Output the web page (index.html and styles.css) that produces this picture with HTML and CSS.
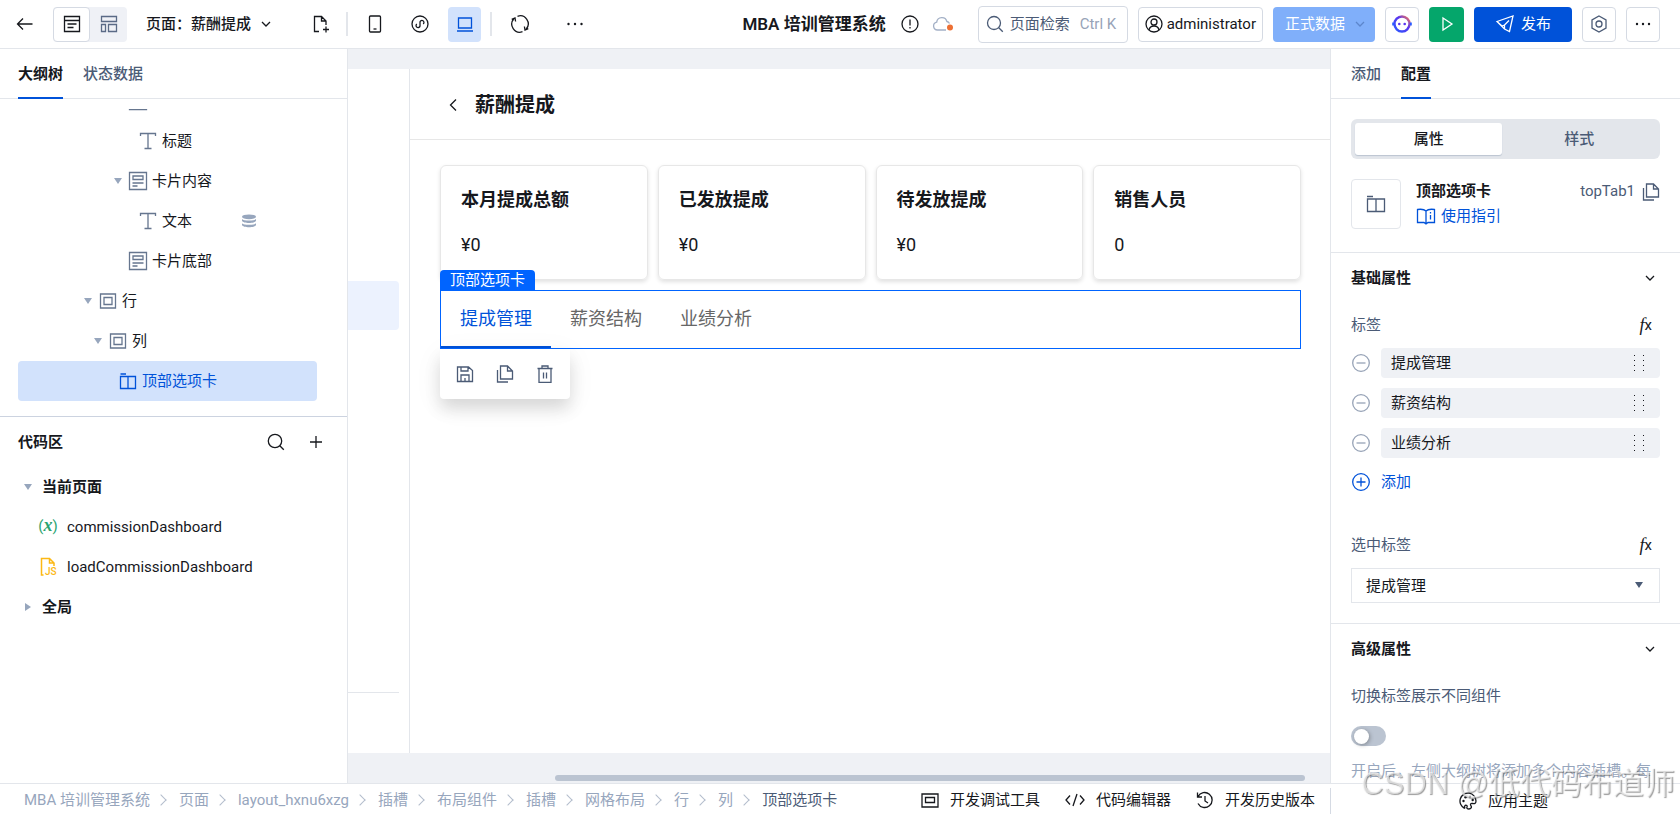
FILE: index.html
```
<!DOCTYPE html>
<html lang="zh-CN">
<head>
    <meta charset="UTF-8">
    <meta name="viewport" content="width=device-width, initial-scale=1.0">
    <title>MBA 培训管理系统</title>
    <link rel="stylesheet" href="styles.css">
</head>
<body>
    <header class="topbar">
        <div class="topbar-left">
            <button class="icon-btn back" aria-label="返回">
                <svg width="18" height="18" viewBox="0 0 18 18"><path d="M16.500 9H2M7 3.500L1.500 9L7 14.500"/></svg>
            </button>
            <div class="view-switch">
                <button class="view-btn active" aria-label="页面视图">
                    <svg width="18" height="18" viewBox="0 0 18 18"><path d="M1.500 1.500h15v15h-15zM1.500 5.500h15M4.500 9h9M4.500 12.500h6"/></svg>
                </button>
                <button class="view-btn" aria-label="布局视图">
                    <svg width="18" height="18" viewBox="0 0 18 18"><path d="M1.500 1.500h15v5h-15zM1.500 9.500h4v7h-4zM8.500 9.500h8v7h-8z"/></svg>
                </button>
            </div>
            <button class="page-select">页面：薪酬提成
                <svg width="12" height="12" viewBox="0 0 12 12"><path d="M2 4l4 4l4-4"/></svg>
            </button>
            <button class="icon-btn new-page" aria-label="新建页面">
                <svg width="18" height="18" viewBox="0 0 18 18"><path d="M7 16.500H2.500v-15h7l4.500 4.500v4M9.500 1.500V6H14M11 14.500h6M14 11.500v6"/></svg>
            </button>
            <span class="divider"></span>
            <div class="devices">
                <button class="icon-btn" aria-label="手机">
                    <svg width="18" height="18" viewBox="0 0 18 18"><rect x="3.500" y="1" width="11" height="16" rx="1"/><path d="M7.500 14h3"/></svg>
                </button>
                <button class="icon-btn" aria-label="小程序">
                    <svg width="18" height="18" viewBox="0 0 18 18"><circle cx="9" cy="9" r="8"/><path d="M5.800 9a2 2 0 1 0 3.200 2V7a2 2 0 1 1 3.200 2"/></svg>
                </button>
                <button class="icon-btn active" aria-label="电脑">
                    <svg width="18" height="18" viewBox="0 0 18 18"><path d="M2.500 3h13v10h-13zM1 16h16"/></svg>
                </button>
            </div>
            <span class="divider"></span>
            <button class="icon-btn refresh" aria-label="刷新">
                <svg width="20" height="20" viewBox="0 0 20 20"><path d="M7.500 2.300a8 8 0 0 1 8.600 12.900M12.500 17.700a8 8 0 0 1-8.600-12.900M18.300 14.600l-3.300 1.500l-.6-3.600M1.700 5.400l3.300-1.500l.6 3.600"/></svg>
            </button>
            <button class="icon-btn more" aria-label="更多">
                <svg width="18" height="18" viewBox="0 0 18 18"><g class="solid"><circle cx="2.500" cy="9" r="1.200"/><circle cx="9" cy="9" r="1.200"/><circle cx="15.500" cy="9" r="1.200"/></g></svg>
            </button>
        </div>
        <div class="topbar-right">
            <h1 class="app-name">MBA 培训管理系统</h1>
            <svg class="info" width="18" height="18" viewBox="0 0 18 18"><circle cx="9" cy="9" r="8"/><path d="M9 4.500v6M9 12v1.500"/></svg>
            <svg class="cloud" width="22" height="18" viewBox="0 0 22 18"><path d="M14 15H5.500a4 4 0 0 1-.8-7.900a5.200 5.200 0 0 1 10.200-.6a4.300 4.300 0 0 1 2.600 2"/><circle class="cloud-dot" cx="18" cy="12.500" r="3"/></svg>
            <button class="box-btn search">
                <svg width="18" height="18" viewBox="0 0 18 18"><circle cx="8" cy="8" r="6.500"/><path d="M12.800 12.800l4 4"/></svg>
                页面检索 <kbd>Ctrl K</kbd>
            </button>
            <button class="box-btn user">
                <svg width="18" height="18" viewBox="0 0 18 18"><circle cx="9" cy="9" r="8"/><circle cx="9" cy="7" r="3"/><path d="M4 15c.6-3 2.500-4 5-4s4.400 1 5 4"/></svg>
                administrator
            </button>
            <button class="box-btn data">正式数据
                <svg width="10" height="10" viewBox="0 0 10 10"><path d="M1 3l4 4l4-4"/></svg>
            </button>
            <button class="box-btn square" aria-label="AI助手">
                <svg width="20" height="20" viewBox="0 0 20 20">
                    <defs><linearGradient id="bot" x1="0" y1="1" x2="1" y2="0"><stop offset="0" stop-color="#2a5bff"/><stop offset=".6" stop-color="#5a35f0"/><stop offset="1" stop-color="#ff7a4d"/></linearGradient></defs>
                    <path class="bot-ring" d="M10 2.500a7.500 7.500 0 1 1 0 15a7.500 7.500 0 1 1 0-15"/>
                    <path class="bot-ears" d="M1.200 8.500v3M18.800 8.500v3"/>
                    <circle class="bot-eye" cx="7.300" cy="10" r="1.300"/><circle class="bot-eye" cx="12.700" cy="10" r="1.300"/>
                </svg>
            </button>
            <button class="box-btn square run" aria-label="运行">
                <svg width="18" height="18" viewBox="0 0 18 18"><path d="M5 3l9 6l-9 6z"/></svg>
            </button>
            <button class="box-btn publish">
                <svg width="20" height="20" viewBox="0 0 20 20"><path d="M2 7.500L18 2l-3.500 15.500l-5-2.500zM9.500 15v-4L14 6.500M2 7.500l5 4.500l2.500-1"/></svg>
                发布
            </button>
            <button class="box-btn square" aria-label="设置">
                <svg class="slate" width="18" height="18" viewBox="0 0 18 18"><path d="M9 1l7 4v8l-7 4l-7-4V5z"/><circle cx="9" cy="9" r="3"/></svg>
            </button>
            <button class="box-btn square" aria-label="更多操作">
                <svg width="18" height="18" viewBox="0 0 18 18"><g class="solid"><circle cx="3" cy="9" r="1.200"/><circle cx="9" cy="9" r="1.200"/><circle cx="15" cy="9" r="1.200"/></g></svg>
            </button>
        </div>
    </header>

    <main class="workspace">
        <aside class="outline">
            <nav class="tabs">
                <button class="tab active">大纲树</button>
                <button class="tab">状态数据</button>
            </nav>
            <ul class="tree">
                <li class="level-4 scrolled"><span class="caret"></span>
                    <svg width="20" height="20" viewBox="0 0 20 20"><path d="M1.500 1.500h17v17h-17z"/></svg></li>
                <li class="level-5"><span class="caret"></span>
                    <svg width="20" height="20" viewBox="0 0 20 20"><path d="M2.500 5V2.500h15V5M10 2.500v15M6.500 17.500h7"/></svg>标题</li>
                <li class="level-4"><span class="caret down"></span>
                    <svg width="20" height="20" viewBox="0 0 20 20"><path d="M1.500 1.500h17v17h-17zM5 5h10v3.500H5zM4.500 12h11M4.500 15h5"/></svg>卡片内容</li>
                <li class="level-5"><span class="caret"></span>
                    <svg width="20" height="20" viewBox="0 0 20 20"><path d="M2.500 5V2.500h15V5M10 2.500v15M6.500 17.500h7"/></svg>文本
                    <svg class="db" width="14" height="14" viewBox="0 0 14 14"><ellipse cx="7" cy="2.800" rx="7" ry="2.400"/><path d="M0 5c1 2 13 2 14 0v1.700c-1 3-13 3-14 0zM0 9.300c1 2 13 2 14 0V11c-1 3-13 3-14 0z"/></svg></li>
                <li class="level-4"><span class="caret"></span>
                    <svg width="20" height="20" viewBox="0 0 20 20"><path d="M1.500 1.500h17v17h-17zM5 5h10v3.500H5zM4.500 12h11M4.500 15h5"/></svg>卡片底部</li>
                <li class="level-1"><span class="caret down"></span>
                    <svg width="20" height="20" viewBox="0 0 20 20"><path d="M2.500 3h15v14h-15zM6 6.500h8v7H6z"/></svg>行</li>
                <li class="level-2"><span class="caret down"></span>
                    <svg width="20" height="20" viewBox="0 0 20 20"><path d="M2.500 3h15v14h-15zM6 6.500h8v7H6z"/></svg>列</li>
                <li class="level-3 selected"><span class="caret"></span>
                    <svg width="20" height="20" viewBox="0 0 20 20"><path d="M2.500 5.500h15v12h-15zM10 5.500v12M2.500 3H8"/></svg>顶部选项卡</li>
            </ul>
            <section class="code">
                <div class="code-head">
                    <h2>代码区</h2>
                    <button class="icon-btn" aria-label="搜索代码">
                        <svg width="18" height="18" viewBox="0 0 18 18"><circle cx="8" cy="8" r="6.700"/><path d="M12.800 12.800l4 4"/></svg>
                    </button>
                    <button class="icon-btn" aria-label="新增代码">
                        <svg width="18" height="18" viewBox="0 0 18 18"><path d="M9 3v12M3 9h12"/></svg>
                    </button>
                </div>
                <ul class="code-list">
                    <li class="group"><span class="caret down"></span>当前页面</li>
                    <li class="file"><svg width="22" height="22" viewBox="0 0 22 22"><text class="var-icon" x="11" y="15" text-anchor="middle">(<tspan class="var-x">x</tspan>)</text></svg>commissionDashboard</li>
                    <li class="file"><svg class="js" width="22" height="20" viewBox="0 0 22 20"><path d="M6.500 18H4.500V1.500h8l4.500 4.500v3M12.500 1.500V6H17"/><text x="8" y="18">JS</text></svg>loadCommissionDashboard</li>
                    <li class="group"><span class="caret right"></span>全局</li>
                </ul>
            </section>
        </aside>

        <section class="canvas">
            <div class="stage">
                <div class="page-menu">
                    <div class="menu-current"></div>
                    <div class="menu-end"></div>
                </div>
                <div class="page">
                    <div class="page-head">
                        <svg width="12" height="14" viewBox="0 0 12 14"><path d="M9 1.500L3.500 7L9 12.500"/></svg>
                        <h2>薪酬提成</h2>
                    </div>
                    <div class="page-body">
                        <div class="cards">
                            <article class="card"><h3>本月提成总额</h3><p>¥0</p></article>
                            <article class="card"><h3>已发放提成</h3><p>¥0</p></article>
                            <article class="card"><h3>待发放提成</h3><p>¥0</p></article>
                            <article class="card"><h3>销售人员</h3><p>0</p></article>
                        </div>
                        <div class="top-tab">
                            <span class="tag">顶部选项卡</span>
                            <button class="top-tab-item active">提成管理</button>
                            <button class="top-tab-item">薪资结构</button>
                            <button class="top-tab-item">业绩分析</button>
                            <div class="toolbar">
                                <button class="icon-btn" aria-label="保存">
                                    <svg width="18" height="18" viewBox="0 0 18 18"><path d="M1.500 2h11l4 3.500v11h-15zM5 2v4h7V2M5 16.500V10h8v6.500M9 13v3"/></svg>
                                </button>
                                <button class="icon-btn" aria-label="复制">
                                    <svg width="18" height="18" viewBox="0 0 18 18"><path d="M4.500 1h7l5 5v8h-12zM11.500 1v5h5M1.500 5v12H12"/></svg>
                                </button>
                                <button class="icon-btn" aria-label="删除">
                                    <svg width="18" height="18" viewBox="0 0 18 18"><path d="M1.500 3.500h15M3 3.500v14h12v-14M6 3.500V1h6v2.500M7.500 7.500v6M10.500 7.500v6"/></svg>
                                </button>
                            </div>
                        </div>
                    </div>
                </div>
            </div>
            <div class="scroll-track"><div class="scroll-thumb"></div></div>
        </section>

        <aside class="config">
            <nav class="tabs">
                <button class="tab">添加</button>
                <button class="tab active">配置</button>
            </nav>
            <section class="config-main">
                <div class="segment">
                    <button class="segment-btn active">属性</button>
                    <button class="segment-btn">样式</button>
                </div>
                <div class="component">
                    <div class="component-icon">
                        <svg width="20" height="20" viewBox="0 0 20 20"><path d="M1.500 5h17v12.500h-17zM10 5v12.500M1 2.500h6"/></svg>
                    </div>
                    <div class="component-text">
                        <strong>顶部选项卡</strong>
                        <a href="#guide"><svg width="20" height="20" viewBox="0 0 20 20"><path d="M10 5C8 3 5 3 1.500 3.500v13H8l2 1.500l2-1.500h6.500v-13C15 3 12 3 10 5v12M14.500 6v1.500M14.500 9v4.500"/></svg>使用指引</a>
                    </div>
                    <span class="component-id">topTab1</span>
                    <button class="icon-btn" aria-label="复制标识">
                        <svg width="18" height="18" viewBox="0 0 18 18"><path d="M4.500 1h7l5 5v8h-12zM11.500 1v5h5M1.500 5v12H12"/></svg>
                    </button>
                </div>
            </section>
            <section class="config-group basic">
                <button class="group-head">基础属性
                    <svg width="12" height="12" viewBox="0 0 12 12"><path d="M2 4l4 4l4-4"/></svg>
                </button>
                <div class="field-head"><span>标签</span><button class="fx" aria-label="表达式"><i>f</i>x</button></div>
                <ul class="labels">
                    <li><button class="icon-btn" aria-label="移除提成管理"><svg width="20" height="20" viewBox="0 0 20 20"><circle cx="10" cy="10" r="8.300"/><path d="M5.500 10h9"/></svg></button><div class="label-item">提成管理<span class="grip"></span></div></li>
                    <li><button class="icon-btn" aria-label="移除薪资结构"><svg width="20" height="20" viewBox="0 0 20 20"><circle cx="10" cy="10" r="8.300"/><path d="M5.500 10h9"/></svg></button><div class="label-item">薪资结构<span class="grip"></span></div></li>
                    <li><button class="icon-btn" aria-label="移除业绩分析"><svg width="20" height="20" viewBox="0 0 20 20"><circle cx="10" cy="10" r="8.300"/><path d="M5.500 10h9"/></svg></button><div class="label-item">业绩分析<span class="grip"></span></div></li>
                </ul>
                <button class="add-label">
                    <svg width="20" height="20" viewBox="0 0 20 20"><circle cx="10" cy="10" r="8.300"/><path d="M5.500 10h9M10 5.500v9"/></svg>添加
                </button>
                <div class="field-head"><label for="selected-tab">选中标签</label><button class="fx" aria-label="表达式"><i>f</i>x</button></div>
                <div class="select">
                    <select id="selected-tab">
                        <option>提成管理</option>
                        <option>薪资结构</option>
                        <option>业绩分析</option>
                    </select>
                </div>
            </section>
            <section class="config-group">
                <button class="group-head">高级属性
                    <svg width="12" height="12" viewBox="0 0 12 12"><path d="M2 4l4 4l4-4"/></svg>
                </button>
                <div class="field-head"><label for="switch-slot">切换标签展示不同组件</label></div>
                <input class="switch" type="checkbox" role="switch" id="switch-slot">
                <p class="help">开启后，左侧大纲树将添加多个内容插槽。每</p>
            </section>
        </aside>
    </main>

    <footer class="statusbar">
        <nav class="crumbs">
            <a href="#app">MBA 培训管理系统</a>
            <a href="#pages">页面</a>
            <a href="#layout">layout_hxnu6xzg</a>
            <a href="#slot">插槽</a>
            <a href="#layout-component">布局组件</a>
            <a href="#slot-inner">插槽</a>
            <a href="#grid">网格布局</a>
            <a href="#row">行</a>
            <a href="#col">列</a>
            <a href="#top-tab" class="current">顶部选项卡</a>
        </nav>
        <div class="tools">
            <button><svg width="18" height="18" viewBox="0 0 18 18"><path d="M1 3h16v13H1zM4.500 6.500h9v5h-9z"/></svg>开发调试工具</button>
            <button><svg width="20" height="18" viewBox="0 0 20 18"><path d="M5 4.500L1 9l4 4.500M15 4.500L19 9l-4 4.500M12 3L8 15"/></svg>代码编辑器</button>
            <button><svg width="18" height="18" viewBox="0 0 18 18"><path d="M2 5.500A7.500 7.500 0 1 1 2 12.500M1.500 1.500v4.500H6M9 5v5l3 2"/></svg>开发历史版本</button>
        </div>
        <div class="theme">
            <button><svg width="18" height="18" viewBox="0 0 18 18"><path d="M5.500 16.300A8 8 0 1 1 17 9c0 2.500-1.500 3-3.500 2.500c-2-.3-2.500 1-1.500 2.300c1 1.500 0 3.200-2 3.200s-2.500-1-2-2c.8-1.800-1.500-2.300-2.300-1s.8 1.600-.2 2.300"/><g class="solid"><circle cx="4.500" cy="9" r="1.200"/><circle cx="6.500" cy="5.300" r="1.200"/><circle cx="11" cy="5" r="1.200"/><circle cx="13.700" cy="8" r="1.200"/></g></svg>应用主题</button>
        </div>
    </footer>
    <div class="watermark">CSDN @低代码布道师</div>
</body>
</html>
```
FILE: styles.css
```
* {
    box-sizing: border-box;
}
html, body {
    height: 100%;
}
body {
    margin: 0;
    display: flex;
    flex-direction: column;
    overflow: hidden;
    font-family: Roboto, "Noto Sans CJK SC", sans-serif;
    font-size: 15px;
    line-height: 20px;
    color: #16181d;
    background: #fff;
}
h1, h2, h3, p, ul {
    margin: 0;
    padding: 0;
}
ul {
    list-style: none;
}
button, select, kbd {
    font: inherit;
    color: inherit;
}
button {
    display: flex;
    align-items: center;
    padding: 0;
    border: 0;
    background: none;
    white-space: nowrap;
    cursor: pointer;
}
a {
    color: inherit;
    text-decoration: none;
}
svg {
    display: block;
    flex: none;
    fill: none;
    stroke: currentColor;
    stroke-width: 1.3;
}
svg text, .solid {
    fill: currentColor;
    stroke: none;
}
.icon-btn {
    justify-content: center;
    flex: none;
}

/* top bar */
.topbar {
    flex: none;
    height: 49px;
    display: flex;
    align-items: center;
    justify-content: space-between;
    padding: 0 20px 0 16px;
    border-bottom: 1px solid #e3e6eb;
}
.topbar-left, .topbar-right, .devices {
    display: flex;
    align-items: center;
}
.view-switch {
    display: flex;
    margin-left: 19px;
    border-radius: 4px;
    background: #eff1f6;
}
.view-btn {
    width: 37px;
    height: 35px;
    justify-content: center;
    border-radius: 4px;
    color: #5a6a86;
}
.view-btn.active {
    border: 1px solid #d5dae3;
    background: #fff;
    color: #16181d;
}
.page-select {
    gap: 9px;
    margin-left: 19px;
    font-weight: 500;
}
.new-page {
    margin-left: 40px;
}
.divider {
    width: 2px;
    height: 24px;
    background: #e3e6eb;
}
.new-page + .divider {
    margin-left: 16px;
}
.devices {
    gap: 12px;
    margin: 0 9px 0 10px;
}
.devices .icon-btn {
    width: 33px;
    height: 35px;
    border-radius: 4px;
}
.devices .active {
    background: #d2e2fc;
    color: #0052d9;
}
.refresh {
    margin-left: 18px;
}
.more {
    margin-left: 36px;
}
.topbar-right {
    gap: 10px;
}
.app-name {
    margin-right: 5px;
    font-size: 17px;
    font-weight: 600;
    white-space: nowrap;
}
.cloud {
    margin: 0 14px 0 3px;
    color: #a3b0c6;
}
.cloud-dot {
    fill: #ed7034;
    stroke: none;
}
.box-btn {
    height: 35px;
    gap: 6px;
    padding: 0 7px;
    border: 1px solid #d5dae3;
    border-radius: 4px;
    background: #fff;
}
.search {
    height: 37px;
    width: 150px;
    color: #4b5b76;
}
.search kbd {
    margin-left: 4px;
    color: #97a3b7;
}
.user {
    gap: 4px;
    padding: 0 6px;
}
.data {
    width: 102px;
    justify-content: space-between;
    padding: 0 10px 0 12px;
    border: 0;
    background: #80affa;
    color: #fff;
}
.data svg {
    color: #5c86cc;
}
.square {
    width: 34px;
    justify-content: center;
    padding: 0;
}
.bot-ring {
    stroke: url(#bot);
    stroke-width: 2.4;
}
.bot-ears {
    stroke: #2a5bff;
    stroke-width: 2;
}
.bot-eye {
    fill: #5a35f0;
    stroke: none;
}
.run {
    width: 35px;
    border: 0;
    background: #05a66b;
    color: #fff;
}
.publish {
    width: 98px;
    justify-content: center;
    border: 0;
    background: #0052d9;
    color: #fff;
}
.slate {
    color: #4b5b76;
}

/* side panels */
.workspace {
    flex: 1;
    min-height: 0;
    display: flex;
}
.outline, .config {
    flex: none;
    display: flex;
    flex-direction: column;
    overflow: hidden;
}
.outline {
    width: 348px;
    border-right: 1px solid #e3e6eb;
}
.config {
    width: 350px;
    border-left: 1px solid #e3e6eb;
}
.tabs {
    flex: none;
    height: 50px;
    display: flex;
    gap: 20px;
    padding: 0 18px;
    border-bottom: 1px solid #e3e6eb;
}
.config .tabs {
    padding: 0 20px;
}
.tab {
    height: 50px;
    padding-top: 2px;
    border-bottom: 2px solid transparent;
    color: #4b5b76;
    font-weight: 500;
}
.tab.active {
    border-bottom-color: #0052d9;
    color: #16181d;
    font-weight: 600;
}

/* outline tree */
.tree {
    flex: none;
    margin-top: 10px;
    padding: 0 30px 15px 18px;
    overflow: hidden;
    border-bottom: 1px solid #ccd3e0;
}
.tree li {
    height: 40px;
    display: flex;
    align-items: center;
    border-radius: 4px;
}
.tree svg {
    margin-right: 4px;
    color: #66768f;
}
.tree .scrolled {
    margin-top: -28px;
}
.level-1 { padding-left: 60px; }
.level-2 { padding-left: 70px; }
.level-3 { padding-left: 80px; }
.level-4 { padding-left: 90px; }
.level-5 { padding-left: 100px; }
.tree .selected {
    background: #d2e2fc;
    color: #0052d9;
}
.tree .selected svg {
    color: #0052d9;
}
.tree .db {
    margin-left: 50px;
    fill: #97a6bd;
    stroke: none;
}
.caret {
    width: 20px;
    display: flex;
    justify-content: center;
}
.caret.down::before, .caret.right::before {
    content: "";
    border: 4px solid transparent;
}
.caret.down::before {
    border-top: 6px solid #97a6bd;
    border-bottom: 0;
}
.caret.right::before {
    border-left: 6px solid #97a6bd;
    border-right: 0;
}

/* code area */
.code-head {
    height: 50px;
    display: flex;
    align-items: center;
    gap: 22px;
    padding: 0 22px 0 18px;
}
.code-head h2 {
    flex: 1;
    font-size: 15px;
    font-weight: 600;
}
.code-list li {
    height: 40px;
    display: flex;
    align-items: center;
}
.group {
    padding-left: 18px;
    gap: 4px;
    font-weight: 600;
}
.file {
    gap: 8px;
    padding-left: 37px;
}
.file svg {
    overflow: visible;
}
svg .var-icon {
    fill: #2ba471;
    font-size: 15px;
}
.var-x {
    font-family: "Liberation Serif", serif;
    font-style: italic;
    font-weight: bold;
    font-size: 18px;
}
.js {
    color: #fcb814;
    stroke-width: 1.5;
}
.js text {
    font-size: 10px;
    font-weight: 500;
}

/* canvas */
.canvas {
    flex: 1;
    min-width: 0;
    display: flex;
    flex-direction: column;
    padding-top: 20px;
    background: #eff1f5;
}
.stage {
    flex: 1;
    display: flex;
    background: #fff;
}
.page-menu {
    width: 62px;
    display: flex;
    flex-direction: column;
    justify-content: space-between;
    padding: 212px 10px 60px 0;
    border-right: 1px solid #e3e6eb;
}
.menu-current {
    height: 49px;
    border-radius: 0 4px 4px 0;
    background: #ecf2fe;
}
.menu-end {
    height: 1px;
    background: #e3e6eb;
}
.page {
    flex: 1;
    min-width: 0;
}
.page-head {
    height: 71px;
    display: flex;
    align-items: center;
    gap: 16px;
    padding: 2px 0 0 37px;
    border-bottom: 1px solid #e7e7e7;
}
.page-head h2 {
    font-size: 20px;
    font-weight: 600;
}
.page-body {
    padding: 25px 29px 0 30px;
    font-size: 18px;
}
.cards {
    display: grid;
    grid-template-columns: repeat(4, 1fr);
    gap: 10px;
}
.card {
    height: 115px;
    padding: 24px 20px;
    border: 1px solid #e7e7e7;
    border-radius: 6px;
    box-shadow: 0 2px 4px rgba(0, 0, 0, 0.12);
}
.card h3 {
    font-size: 18px;
    font-weight: 600;
}
.card p {
    margin-top: 25px;
}
.top-tab {
    position: relative;
    height: 59px;
    display: flex;
    margin-top: 10px;
    border: 1px solid #0064ff;
}
.top-tab-item {
    padding: 0 19px;
    border-bottom: 2px solid transparent;
    color: #666;
}
.top-tab-item.active {
    border-color: #0052d9;
    color: #0052d9;
}
.tag {
    position: absolute;
    left: -1px;
    bottom: calc(100% + 1px);
    padding: 0 10px;
    border-radius: 4px 4px 0 0;
    background: #0064ff;
    color: #fff;
    font-size: 15px;
}
.toolbar {
    position: absolute;
    left: -1px;
    top: calc(100% + 1px);
    height: 50px;
    display: flex;
    gap: 22px;
    padding: 0 16px;
    border-radius: 0 0 4px 4px;
    background: #fff;
    color: #4b5b76;
    box-shadow: 0 10px 16px rgba(0, 0, 0, 0.12), 0 6px 30px rgba(0, 0, 0, 0.06);
}
.scroll-track {
    flex: none;
    height: 30px;
    display: flex;
    align-items: flex-end;
    padding: 0 25px 2px 207px;
}
.scroll-thumb {
    flex: 1;
    height: 6px;
    border-radius: 3px;
    background: #bbc4d1;
}

/* config panel */
.config-main {
    flex: none;
    padding: 20px 20px 23px;
    border-bottom: 1px solid #e3e6eb;
}
.segment {
    height: 40px;
    display: flex;
    padding: 4px;
    border-radius: 6px;
    background: #e3e6eb;
}
.segment-btn {
    flex: 1;
    justify-content: center;
    border-radius: 3px;
    color: #4b5b76;
    font-weight: 500;
}
.segment-btn.active {
    flex: 0 0 49%;
    background: #fff;
    color: #16181d;
    box-shadow: 0 1px 1px #bbc4d1;
}
.component {
    display: flex;
    align-items: flex-start;
    margin-top: 20px;
}
.component-icon {
    width: 50px;
    height: 50px;
    display: flex;
    align-items: center;
    justify-content: center;
    border: 1px solid #e3e6eb;
    border-radius: 4px;
    color: #4b5b76;
}
.component-text {
    flex: 1;
    margin-left: 15px;
}
.component-text strong {
    display: block;
    margin: 2px 0 5px;
    font-weight: 600;
}
.component-text a {
    display: flex;
    gap: 5px;
    color: #0052d9;
}
.component-id {
    margin: 2px 7px 0 0;
    color: #4b5b76;
}
.component .icon-btn {
    margin-top: 4px;
    color: #4b5b76;
}
.config-group {
    flex: none;
    padding: 0 20px 20px;
}
.config-group.basic {
    border-bottom: 1px solid #e3e6eb;
}
.group-head {
    width: 100%;
    height: 49px;
    justify-content: space-between;
    padding-right: 4px;
    font-weight: 600;
}
.field-head {
    height: 46px;
    display: flex;
    align-items: center;
    justify-content: space-between;
    padding-right: 8px;
    color: #4b5b76;
}
.fx {
    color: #16181d;
}
.fx i {
    font-size: 18px;
    font-family: "Liberation Serif", serif;
}
.labels {
    display: grid;
    gap: 10px;
}
.labels li {
    display: flex;
    gap: 10px;
}
.labels .icon-btn {
    color: #97a3b7;
}
.label-item {
    flex: 1;
    height: 30px;
    display: flex;
    align-items: center;
    justify-content: space-between;
    padding: 0 16px 0 10px;
    border-radius: 4px;
    background: #eff1f5;
}
.grip {
    width: 10px;
    height: 16px;
    background:
        repeating-linear-gradient(#16181d 0 1px, transparent 1px 5px) left / 1px 100% no-repeat,
        repeating-linear-gradient(#16181d 0 1px, transparent 1px 5px) right / 1px 100% no-repeat;
}
.add-label {
    height: 48px;
    gap: 10px;
    margin-bottom: 16px;
    color: #0052d9;
}
.select {
    position: relative;
}
.select::after {
    content: "";
    position: absolute;
    top: 14px;
    right: 17px;
    border: 4px solid transparent;
    border-top: 6px solid #4b5b76;
    border-bottom: 0;
    pointer-events: none;
}
select {
    display: block;
    width: 100%;
    height: 35px;
    padding: 0 14px;
    appearance: none;
    border: 1px solid #e3e6eb;
    border-radius: 0;
    background: #fff;
}
.switch {
    display: flex;
    align-items: center;
    width: 35px;
    height: 20px;
    margin: 7px 0 15px;
    padding: 3px;
    appearance: none;
    border-radius: 10px;
    background: #bbc4d1;
}
.switch::before {
    content: "";
    width: 15px;
    height: 15px;
    border-radius: 50%;
    background: #fff;
    box-shadow: 1px 1px 4px rgba(0, 0, 0, 0.3);
}
.switch:checked {
    justify-content: flex-end;
    background: #0052d9;
}
.help {
    color: #97a6bd;
    white-space: nowrap;
}

/* status bar */
.statusbar {
    flex: none;
    height: 31px;
    display: flex;
    border-top: 1px solid #e3e6eb;
}
.crumbs {
    flex: 1;
    display: flex;
    align-items: center;
    padding: 2px 0 0 24px;
    color: #97a6bd;
    white-space: nowrap;
}
.crumbs a {
    display: flex;
    align-items: center;
}
.crumbs a + a::before {
    content: "";
    width: 7px;
    height: 7px;
    margin: 0 14px 0 7px;
    border: solid #b3bdcc;
    border-width: 1px 1px 0 0;
    transform: rotate(45deg);
}
.crumbs .current {
    color: #4b5b76;
}
.tools {
    display: flex;
    gap: 25px;
    padding: 2px 15px 0 0;
}
.tools button, .theme button {
    gap: 11px;
}
.theme {
    width: 350px;
    display: flex;
    justify-content: center;
    margin-top: 4px;
    padding-right: 4px;
    border-left: 1px solid #d5dae3;
}

.watermark {
    position: fixed;
    right: 5px;
    bottom: 12px;
    color: rgba(255, 255, 255, 0.6);
    font-family: "Liberation Sans", "Noto Sans CJK SC", sans-serif;
    font-size: 31px;
    line-height: 36px;
    text-shadow: 1px 1px 1px rgba(90, 90, 90, 0.6);
    pointer-events: none;
}
```
